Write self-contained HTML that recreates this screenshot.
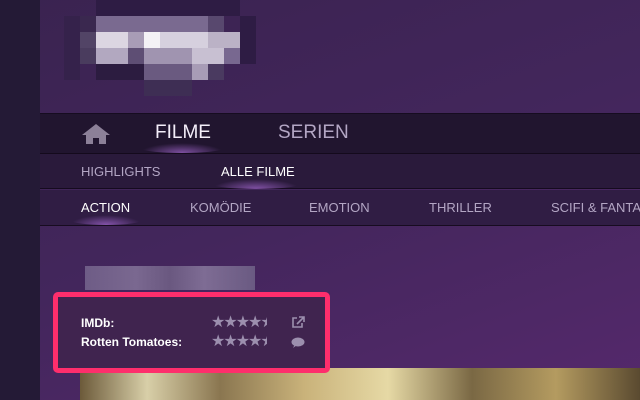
<!DOCTYPE html>
<html><head><meta charset="utf-8"><style>
*{margin:0;padding:0;box-sizing:border-box}
body{width:640px;height:400px;overflow:hidden;position:relative;font-family:"Liberation Sans",sans-serif;background:linear-gradient(160deg,#3a2350 0%,#43265c 50%,#55296c 100%)}
.left{position:absolute;left:0;top:0;width:40px;height:400px;background:#241a36}
.px{position:absolute;width:16px;height:16px}
.bar{position:absolute;left:40px;right:0}
.nav{top:113px;height:41px;background:#21152f;border-top:1px solid #160c20;border-bottom:1px solid #140a1c}
.sub{top:154px;height:35px;background:#2a1a3b;border-bottom:1px solid #150b1e}
.gen{top:190px;height:36px;background:#301d44;border-bottom:1px solid #170c20}
.t{position:absolute;color:#b3a6c4;white-space:nowrap}
.glow{position:absolute;height:10px;border-radius:50%;background:radial-gradient(ellipse at 50% 100%,rgba(190,120,240,.6),rgba(120,60,180,0) 70%)}
.img{position:absolute;left:80px;top:368px;width:560px;height:32px;background:linear-gradient(90deg,#6c5a3a 0%,#d8cfa8 12%,#8a7650 25%,#c9b27a 40%,#e6d9a5 55%,#7a6844 70%,#b49b60 85%,#5a4a30 100%)}
.box{position:absolute;left:53px;top:292px;width:277px;height:81px;border:5px solid #fe2e6c;border-radius:5px;background:#40244f}
.lbl{position:absolute;color:#fff;font-weight:bold;font-size:12px}
.st{position:absolute;color:#9c8fae;font-size:16px;letter-spacing:-2px;line-height:16px}
</style></head><body>
<div class="left"></div>
<div class="px" style="left:96px;top:0;width:144px;background:#2e1c44"></div>
<div class="px" style="left:64px;top:16px;width:16px;height:64px;background:#35224b"></div>
<div class="px" style="left:80px;top:16px;background:#3a284f"></div>
<div class="px" style="left:96px;top:16px;width:112px;background:#7a6a90"></div>
<div class="px" style="left:208px;top:16px;background:#58486e"></div>
<div class="px" style="left:240px;top:16px;height:48px;background:#2e1c44"></div>
<div class="px" style="left:80px;top:32px;background:#524466"></div>
<div class="px" style="left:96px;top:32px;width:32px;background:#dcd6e2"></div>
<div class="px" style="left:128px;top:32px;background:#a89cb6"></div>
<div class="px" style="left:144px;top:32px;background:#f4f2f6"></div>
<div class="px" style="left:160px;top:32px;width:48px;background:#d6d0de"></div>
<div class="px" style="left:208px;top:32px;width:32px;background:#bbb2c6"></div>
<div class="px" style="left:80px;top:48px;background:#4a3c5e"></div>
<div class="px" style="left:96px;top:48px;width:32px;background:#b2a8c0"></div>
<div class="px" style="left:128px;top:48px;background:#5e4e74"></div>
<div class="px" style="left:144px;top:48px;width:48px;background:#a094b0"></div>
<div class="px" style="left:192px;top:48px;width:32px;background:#c8c0d2"></div>
<div class="px" style="left:224px;top:48px;background:#786890"></div>
<div class="px" style="left:96px;top:64px;width:48px;background:#2c1c40"></div>
<div class="px" style="left:144px;top:64px;width:48px;background:#6a5a80"></div>
<div class="px" style="left:192px;top:64px;background:#a89cb6"></div>
<div class="px" style="left:208px;top:64px;background:#4a3a60"></div>
<div class="px" style="left:144px;top:80px;width:48px;background:#3e2e54"></div>

<div class="bar nav"></div>
<div class="bar sub"></div>
<div class="bar gen"></div>
<svg style="position:absolute;left:80px;top:123px" width="32" height="22" viewBox="0 0 32 22"><path d="M16 1 L30 12 L26 12 L26 21 L19 21 L19 15 L13 15 L13 21 L6 21 L6 12 L2 12 Z" fill="#8c8098"/></svg>
<div class="glow" style="left:140px;top:143px;width:84px"></div>
<div class="t" style="left:155px;top:122px;font-size:19px;color:#f4eefa">FILME</div>
<div class="t" style="left:278px;top:122px;font-size:19px">SERIEN</div>
<div class="glow" style="left:212px;top:179px;width:88px"></div>
<div class="t" style="left:81px;top:164px;font-size:13px">HIGHLIGHTS</div>
<div class="t" style="left:221px;top:164px;font-size:13px;color:#fff">ALLE FILME</div>
<div class="glow" style="left:70px;top:215px;width:72px"></div>
<div class="t" style="left:81px;top:200px;font-size:13px;color:#fff">ACTION</div>
<div class="t" style="left:190px;top:200px;font-size:13px">KOMÖDIE</div>
<div class="t" style="left:309px;top:200px;font-size:13px">EMOTION</div>
<div class="t" style="left:429px;top:200px;font-size:13px">THRILLER</div>
<div class="t" style="left:551px;top:200px;font-size:13px">SCIFI &amp; FANTASY</div>
<div style="position:absolute;left:85px;top:266px;width:170px;height:24px;background:linear-gradient(90deg,#6e5c86,#7a6890 30%,#6a5880 50%,#7e6c94 70%,#6a5a82)"></div>
<div class="img"></div>
<div class="box"></div>
<div class="lbl" style="left:81px;top:316px">IMDb:</div>
<div class="lbl" style="left:81px;top:335px">Rotten Tomatoes:</div>
<div class="st" style="left:211px;top:315px">★★★★<span style="display:inline-block;width:7px;overflow:hidden;vertical-align:top">★</span></div>
<div class="st" style="left:211px;top:334px">★★★★<span style="display:inline-block;width:7px;overflow:hidden;vertical-align:top">★</span></div>
<svg style="position:absolute;left:291px;top:316px" width="14" height="13" viewBox="0 0 14 13"><path d="M6 2H2v9h9V7" fill="none" stroke="#9c8fae" stroke-width="1.6"/><path d="M8 1h5v5M13 1L6 8" fill="none" stroke="#9c8fae" stroke-width="1.6"/></svg>
<svg style="position:absolute;left:291px;top:337px" width="14" height="12" viewBox="0 0 14 12"><ellipse cx="7" cy="5" rx="6.5" ry="4.5" fill="#9c8fae"/><path d="M2 11 L4 7 L6 8 Z" fill="#9c8fae"/></svg>
</body></html>
